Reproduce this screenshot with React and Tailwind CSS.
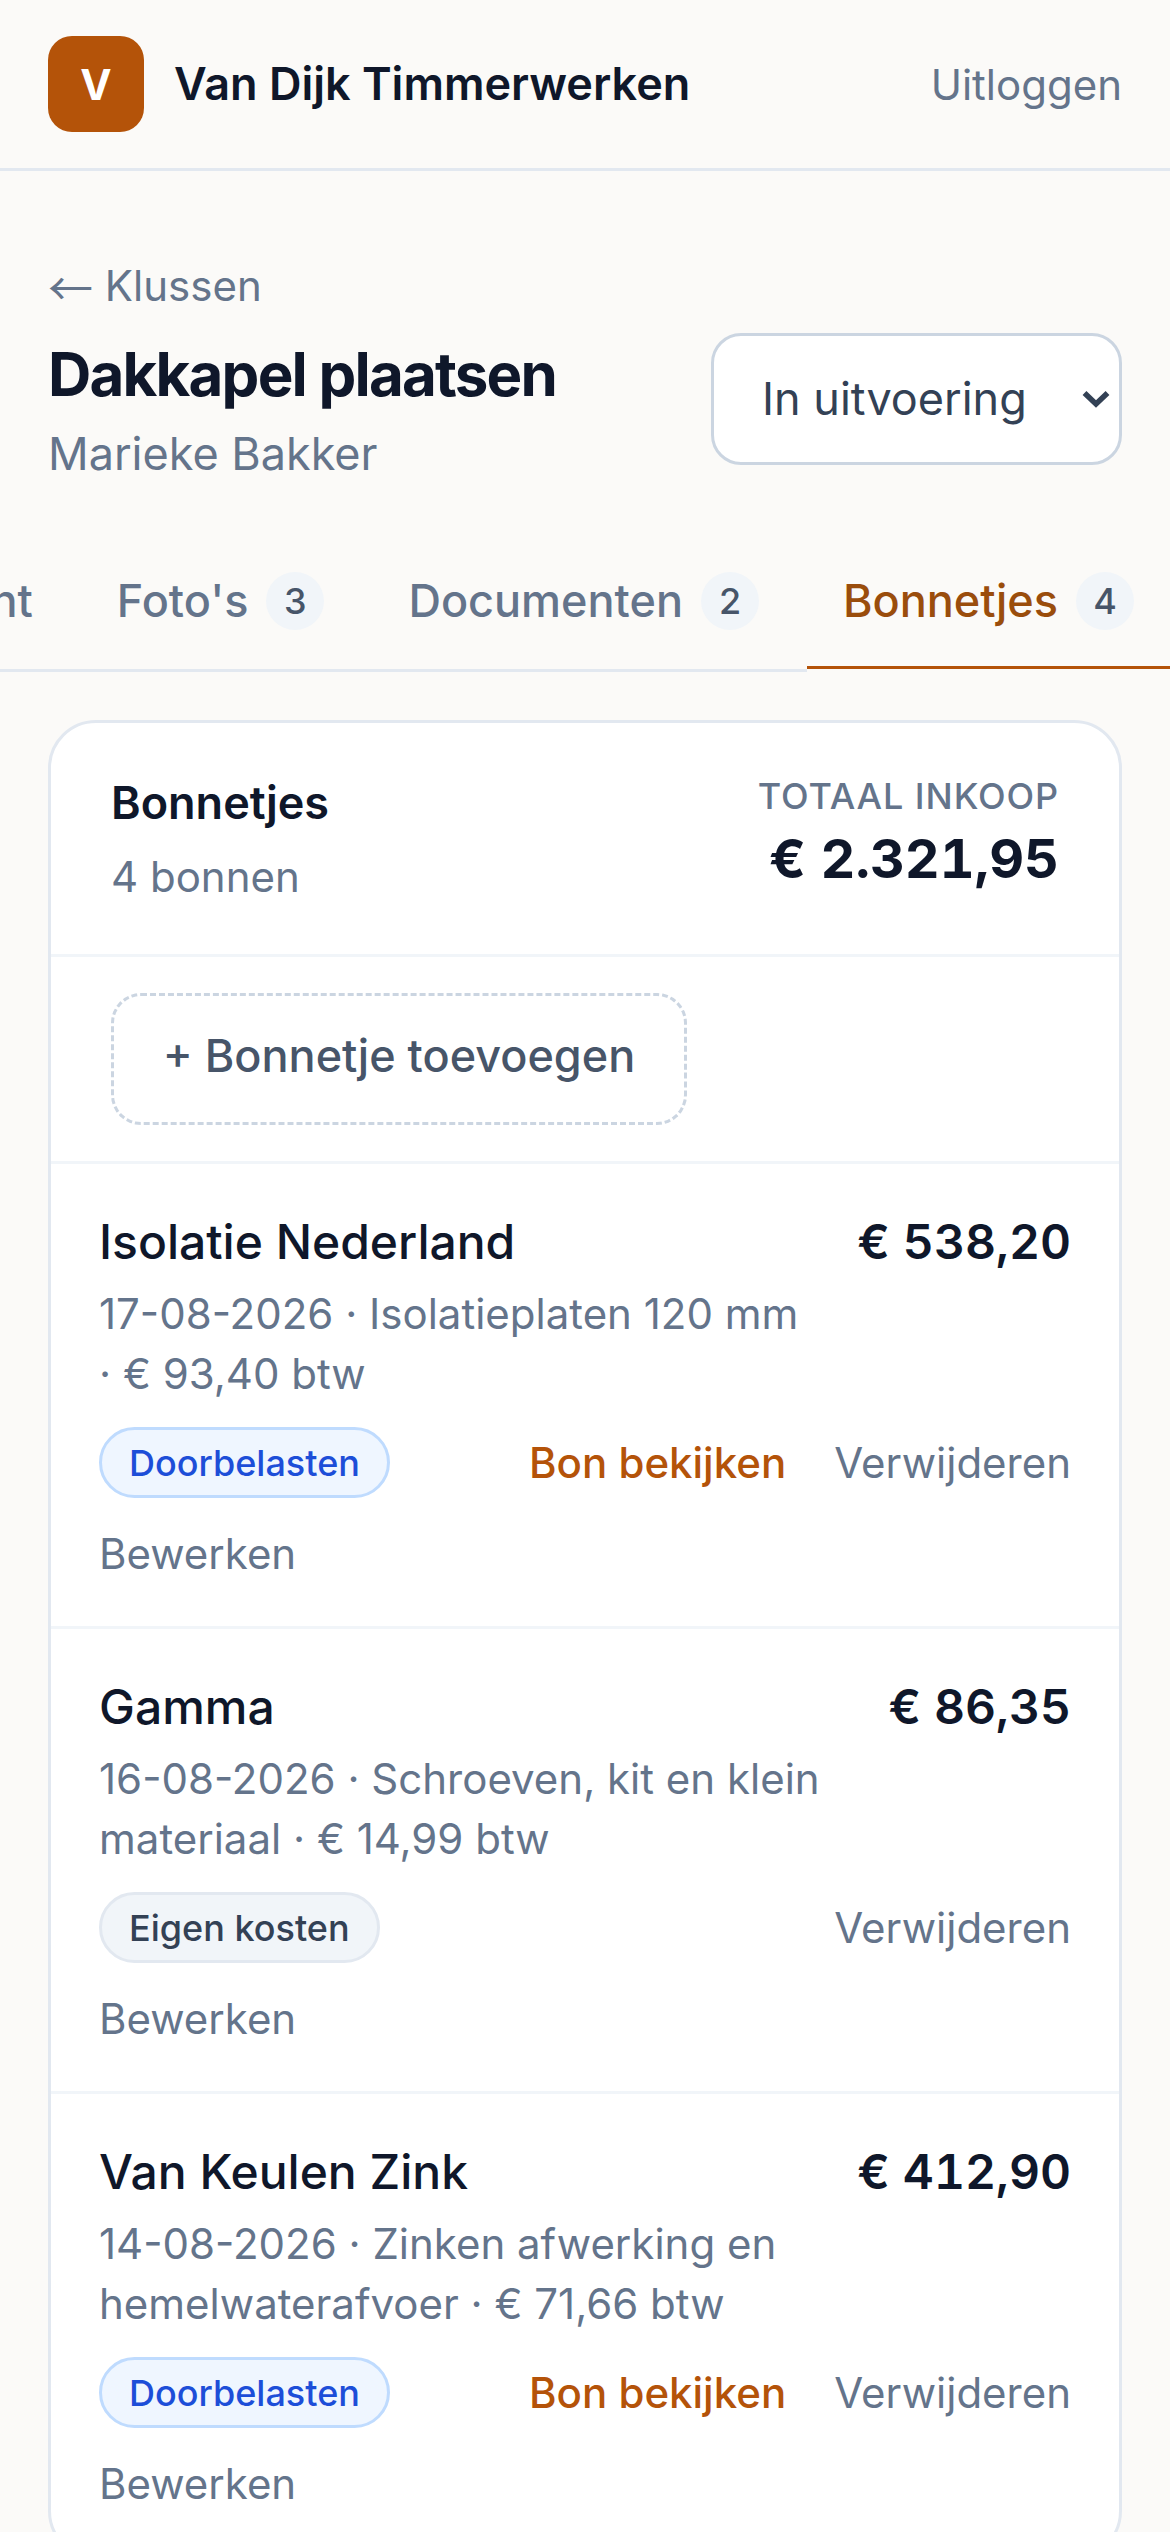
import React from "react";

const TABS = [
  { label: "Klant" },
  { label: "Foto's", count: 3 },
  { label: "Documenten", count: 2 },
  { label: "Bonnetjes", count: 4, active: true },
];

const RECEIPTS = [
  { id: 1, name: "Isolatie Nederland", amount: "€ 538,20", meta: "17-08-2026 · Isolatieplaten 120 mm · € 93,40 btw", billed: true, hasFile: true },
  { id: 2, name: "Gamma", amount: "€ 86,35", meta: "16-08-2026 · Schroeven, kit en klein materiaal · € 14,99 btw", billed: false, hasFile: false },
  { id: 3, name: "Van Keulen Zink", amount: "€ 412,90", meta: "14-08-2026 · Zinken afwerking en hemelwaterafvoer · € 71,66 btw", billed: true, hasFile: true },
];

function Tab({ tab }) {
  return (
    <div
      className={[
        "shrink-0 flex items-center gap-[18px] px-[36px] h-[133px] border-b-[3px] text-[45px] font-medium",
        tab.active
          ? "border-[#b45309] text-[#9a4d0c] shadow-[0_3px_0_#fbfaf8]"
          : "border-transparent text-[#64748b]",
      ].join(" ")}
    >
      <span>{tab.label}</span>
      {tab.count && (
        <span className="w-[58px] h-[58px] rounded-full bg-[#f1f5f9] text-[#475569] text-[36px] font-medium flex items-center justify-center">
          {tab.count}
        </span>
      )}
    </div>
  );
}

function ReceiptRow({ receipt }) {
  return (
    <div className="border-t-[3px] border-[#f1f5f9] px-[48px] pt-[42px] h-[465px]">
      <div className="flex justify-between gap-[48px]">
        <div className="min-w-0 flex-1">
          <div className="text-[48px] leading-[72px] font-medium text-[#0f172a]">{receipt.name}</div>
          <div className="text-[42px] leading-[60px] text-[#64748b] mt-[6px]">{receipt.meta}</div>
        </div>
        <div className="shrink-0 text-[48px] leading-[72px] font-semibold tabular-nums text-[#0f172a]">{receipt.amount}</div>
      </div>
      <div className="flex items-center justify-between mt-[23px]">
        {receipt.billed ? (
          <span className="h-[71px] px-[27px] rounded-full border-[3px] border-[#bfdbfe] bg-[#eff6ff] text-[#1d4ed8] text-[36px] font-medium flex items-center">
            Doorbelasten
          </span>
        ) : (
          <span className="h-[71px] px-[27px] rounded-full border-[3px] border-[#e2e8f0] bg-[#f1f5f9] text-[#334155] text-[36px] font-medium flex items-center">
            Eigen kosten
          </span>
        )}
        <div className="flex items-center gap-[48px] text-[42px]">
          {receipt.hasFile && <span className="font-medium text-[#b45309]">Bon bekijken</span>}
          <span className="text-[#64748b]">Verwijderen</span>
        </div>
      </div>
      <div className="text-[42px] leading-[63px] text-[#64748b] mt-[24px]">Bewerken</div>
    </div>
  );
}

export default function App() {
  return (
    <div
      className="w-[1170px] h-[2532px] overflow-hidden bg-[#fbfaf8]"
      style={{ fontFamily: "Inter, 'Liberation Sans', sans-serif" }}
    >
      <header className="h-[171px] border-b-[3px] border-[#e2e8f0] px-[48px] flex items-center justify-between">
        <div className="flex items-center gap-[30px]">
          <div className="w-[96px] h-[96px] rounded-[24px] bg-[#b45309] text-white text-[42px] font-bold flex items-center justify-center">
            V
          </div>
          <div className="text-[45px] font-semibold text-[#0f172a]">Van Dijk Timmerwerken</div>
        </div>
        <span className="text-[42px] text-[#64748b]">Uitloggen</span>
      </header>

      <div className="px-[48px] pt-[83px] flex items-center justify-between">
        <div>
          <div className="text-[42px] leading-[63px] text-[#64748b]">
            <span className="font-['Noto_Sans_CJK_JP'] text-[45px] leading-[0] align-[-5px]">←</span> Klussen
          </div>
          <h1 className="text-[60px] leading-[78px] font-bold tracking-[-1.8px] text-[#0f172a] mt-[18px]">Dakkapel plaatsen</h1>
          <div className="text-[45px] leading-[66px] text-[#64748b] mt-[8px]">Marieke Bakker</div>
        </div>
        <div className="relative w-[411px] h-[132px] mt-[56px]">
          <select className="w-full h-full appearance-none rounded-[30px] border-[3px] border-[#cbd5e1] bg-white pl-[48px] text-[45px] text-[#334155] outline-none">
            <option>In uitvoering</option>
          </select>
          <svg className="absolute right-[12px] top-[57px] w-[28px] h-[18px]" viewBox="0 0 28 18" fill="none">
            <path d="M2.500 3 14 14 25.500 3" stroke="#334155" strokeWidth="5.500" />
          </svg>
        </div>
      </div>

      <div className="mt-[49px] border-b-[3px] border-[#e2e8f0] flex justify-end gap-[12px] overflow-x-clip">
        {TABS.map((tab) => (
          <Tab key={tab.label} tab={tab} />
        ))}
      </div>

      <div className="px-[48px] pt-[48px]">
        <div className="rounded-[48px] border-[3px] border-[#e2e8f0] bg-white">
          <div className="h-[231px] px-[60px] pt-[47px] flex justify-between">
            <div>
              <div className="text-[45px] leading-[66px] font-semibold text-[#0f172a]">Bonnetjes</div>
              <div className="text-[42px] leading-[63px] text-[#64748b] mt-[9px]">4 bonnen</div>
            </div>
            <div className="text-right">
              <div className="text-[36px] leading-[54px] tracking-[0.9px] font-medium text-[#64748b] -mt-[1px]">TOTAAL INKOOP</div>
              <div className="text-[54px] leading-[72px] font-bold tabular-nums text-[#0f172a]">€ 2.321,95</div>
            </div>
          </div>
          <div className="border-t-[3px] border-[#f1f5f9] px-[60px] py-[36px]">
            <div className="w-[576px] h-[132px] pb-[6px] rounded-[30px] border-[3px] border-dashed border-[#cbd5e1] text-[45px] font-medium text-[#475569] flex items-center justify-center">
              + Bonnetje toevoegen
            </div>
          </div>
          {RECEIPTS.map((r) => (
            <ReceiptRow key={r.id} receipt={r} />
          ))}
        </div>
      </div>
    </div>
  );
}
